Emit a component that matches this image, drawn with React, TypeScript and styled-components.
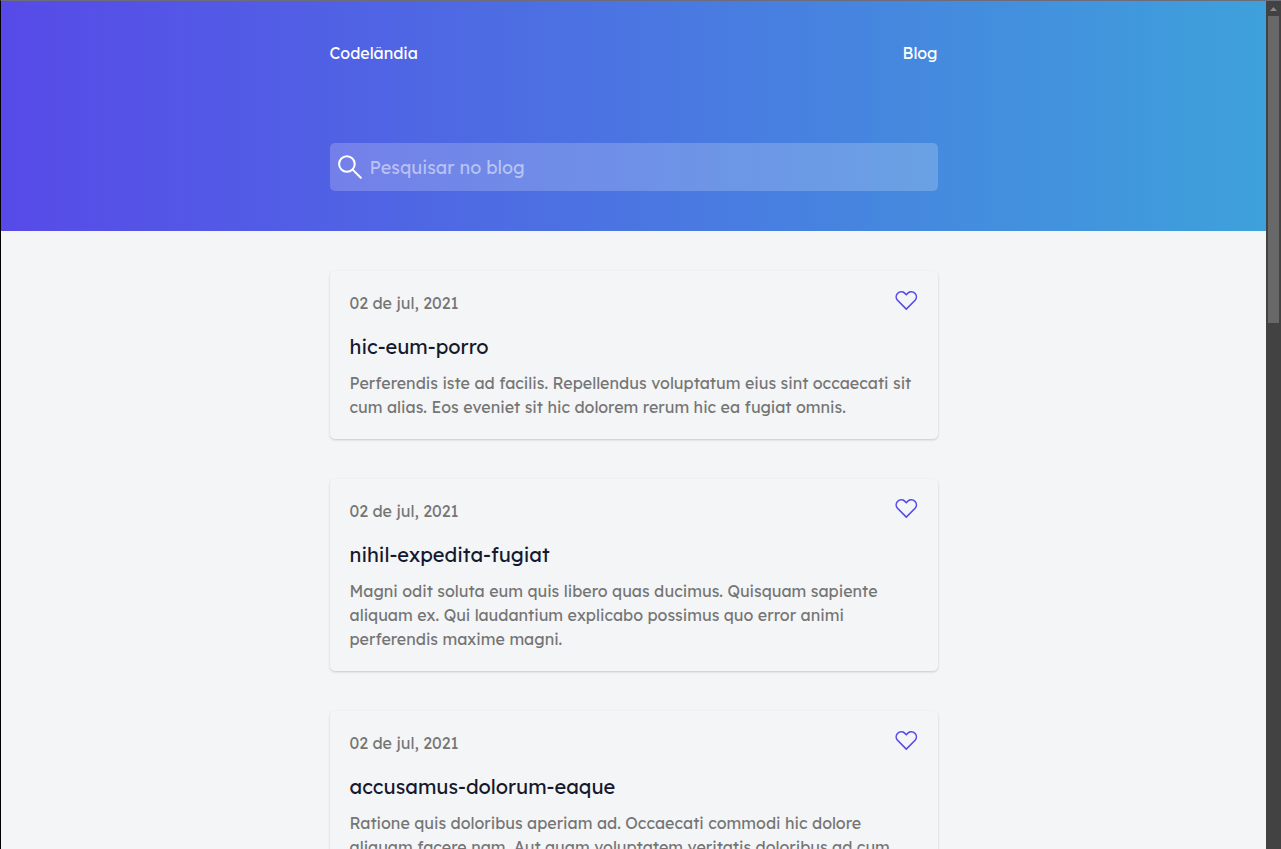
import React, { useState } from "react";
import styled, { createGlobalStyle } from "styled-components";

const GlobalStyle = createGlobalStyle`
  *, *::before, *::after { box-sizing: border-box; }
  body {
    margin: 0;
    background: #f4f5f7;
    font-family: Lexend, Inter, sans-serif;
    font-size: 16px;
    line-height: 24px;
    color: #757575;
  }
  button, input { font: inherit; }
`;

const Frame = styled.div`
  display: flex;
  height: 100vh;
  overflow: hidden;
  border-top: 1px solid #6c6c7c;
  border-left: 1px solid #000000;
`;

const Page = styled.div`
  flex: 1;
  min-width: 0;
  overflow: hidden;
`;

const Container = styled.div`
  width: 100%;
  max-width: 640px;
  margin: 0 auto;
  padding: 0 16px;
`;

const Header = styled.header`
  padding: 40px 0;
  background: linear-gradient(90deg, #574ae8 0%, #3ea1db 100%);
`;

const Nav = styled.nav`
  display: flex;
  justify-content: space-between;
  margin-bottom: 78px;
`;

const NavLink = styled.a`
  color: #ffffff;
  text-decoration: none;
`;

const SearchBox = styled.label`
  display: flex;
  align-items: center;
  gap: 8px;
  height: 48px;
  padding: 0 8px;
  border-radius: 5px;
  background: rgba(255, 255, 255, 0.2);
  color: #ffffff;
`;

const SearchInput = styled.input`
  flex: 1;
  min-width: 0;
  height: 100%;
  padding: 0;
  border: 0;
  outline: 0;
  background: transparent;
  color: #ffffff;
  font-size: 18px;

  &::placeholder {
    color: rgba(255, 255, 255, 0.5);
    opacity: 1;
  }
`;

const Icon = styled.svg`
  display: block;
  flex: none;
  width: 24px;
  height: 24px;
  fill: none;
  stroke: currentColor;
  stroke-linecap: round;
`;

const Posts = styled.main`
  display: grid;
  gap: 40px;
  padding: 40px 0;
`;

const Card = styled.article`
  padding: 20px;
  border-radius: 5px;
  box-shadow: 0 1px 3px rgba(0, 0, 0, 0.12), 0 1px 2px rgba(0, 0, 0, 0.07);
`;

const CardTop = styled.div`
  display: flex;
  justify-content: space-between;
  align-items: flex-start;
  height: 24px;
`;

const LikeButton = styled.button`
  margin-top: -3px;
  padding: 0;
  border: 0;
  background: none;
  color: #574ae8;
  cursor: pointer;
`;

const Title = styled.h2`
  margin: 16px 0 8px;
  color: #16192c;
  font-size: 20px;
  font-weight: 400;
  line-height: 32px;
`;

const Excerpt = styled.p`
  margin: 0;
`;

const ScrollTrack = styled.div`
  display: flex;
  flex-direction: column;
  align-items: center;
  flex: none;
  width: 15px;
  background: #424242;
`;

const ScrollArrow = styled.svg`
  width: 15px;
  height: 15px;
  fill: #8a8a8a;
`;

const ScrollThumb = styled.div`
  width: 11px;
  height: 36.2%;
  background: #686868;
`;

type Post = { date: string; title: string; excerpt: string };

const posts: Post[] = [
  {
    date: "02 de jul, 2021",
    title: "hic-eum-porro",
    excerpt:
      "Perferendis iste ad facilis. Repellendus voluptatum eius sint occaecati sit cum alias. Eos eveniet sit hic dolorem rerum hic ea fugiat omnis.",
  },
  {
    date: "02 de jul, 2021",
    title: "nihil-expedita-fugiat",
    excerpt:
      "Magni odit soluta eum quis libero quas ducimus. Quisquam sapiente aliquam ex. Qui laudantium explicabo possimus quo error animi perferendis maxime magni.",
  },
  {
    date: "02 de jul, 2021",
    title: "accusamus-dolorum-eaque",
    excerpt:
      "Ratione quis doloribus aperiam ad. Occaecati commodi hic dolore aliquam facere nam. Aut quam voluptatem veritatis doloribus ad cum",
  },
];

function PostCard({ post }: { post: Post }) {
  const [liked, setLiked] = useState(false);
  return (
    <Card>
      <CardTop>
        <time dateTime="2021-07-02">{post.date}</time>
        <LikeButton
          type="button"
          aria-label="Curtir"
          aria-pressed={liked}
          onClick={() => setLiked(!liked)}
        >
          <Icon viewBox="0 0 24 24" strokeWidth="1.6" aria-hidden="true">
            <path
              fill={liked ? "currentColor" : "none"}
              d="M12.3 21.1 3.5 12.3A5.1 5.1 0 0 1 10.7 5.1L12.3 6.7 13.9 5.1A5.1 5.1 0 0 1 21.1 12.3Z"
            />
          </Icon>
        </LikeButton>
      </CardTop>
      <Title>{post.title}</Title>
      <Excerpt>{post.excerpt}</Excerpt>
    </Card>
  );
}

export default function App() {
  return (
    <Frame>
      <GlobalStyle />
      <Page>
        <Header>
          <Container>
            <Nav>
              <NavLink href="#inicio">Codelândia</NavLink>
              <NavLink href="#blog">Blog</NavLink>
            </Nav>
            <SearchBox>
              <Icon viewBox="0 0 24 24" strokeWidth="2" aria-hidden="true">
                <circle cx="8.9" cy="9" r="7.8" />
                <path d="M14.6 14.6 22.8 22.8" />
              </Icon>
              <SearchInput
                type="text"
                aria-label="Pesquisar no blog"
                placeholder="Pesquisar no blog"
              />
            </SearchBox>
          </Container>
        </Header>
        <Container>
          <Posts>
            {posts.map((post) => (
              <PostCard key={post.title} post={post} />
            ))}
          </Posts>
        </Container>
      </Page>
      <ScrollTrack aria-hidden="true">
        <ScrollArrow viewBox="0 0 15 15">
          <path d="M7.5 6 11 10H4Z" />
        </ScrollArrow>
        <ScrollThumb />
      </ScrollTrack>
    </Frame>
  );
}
